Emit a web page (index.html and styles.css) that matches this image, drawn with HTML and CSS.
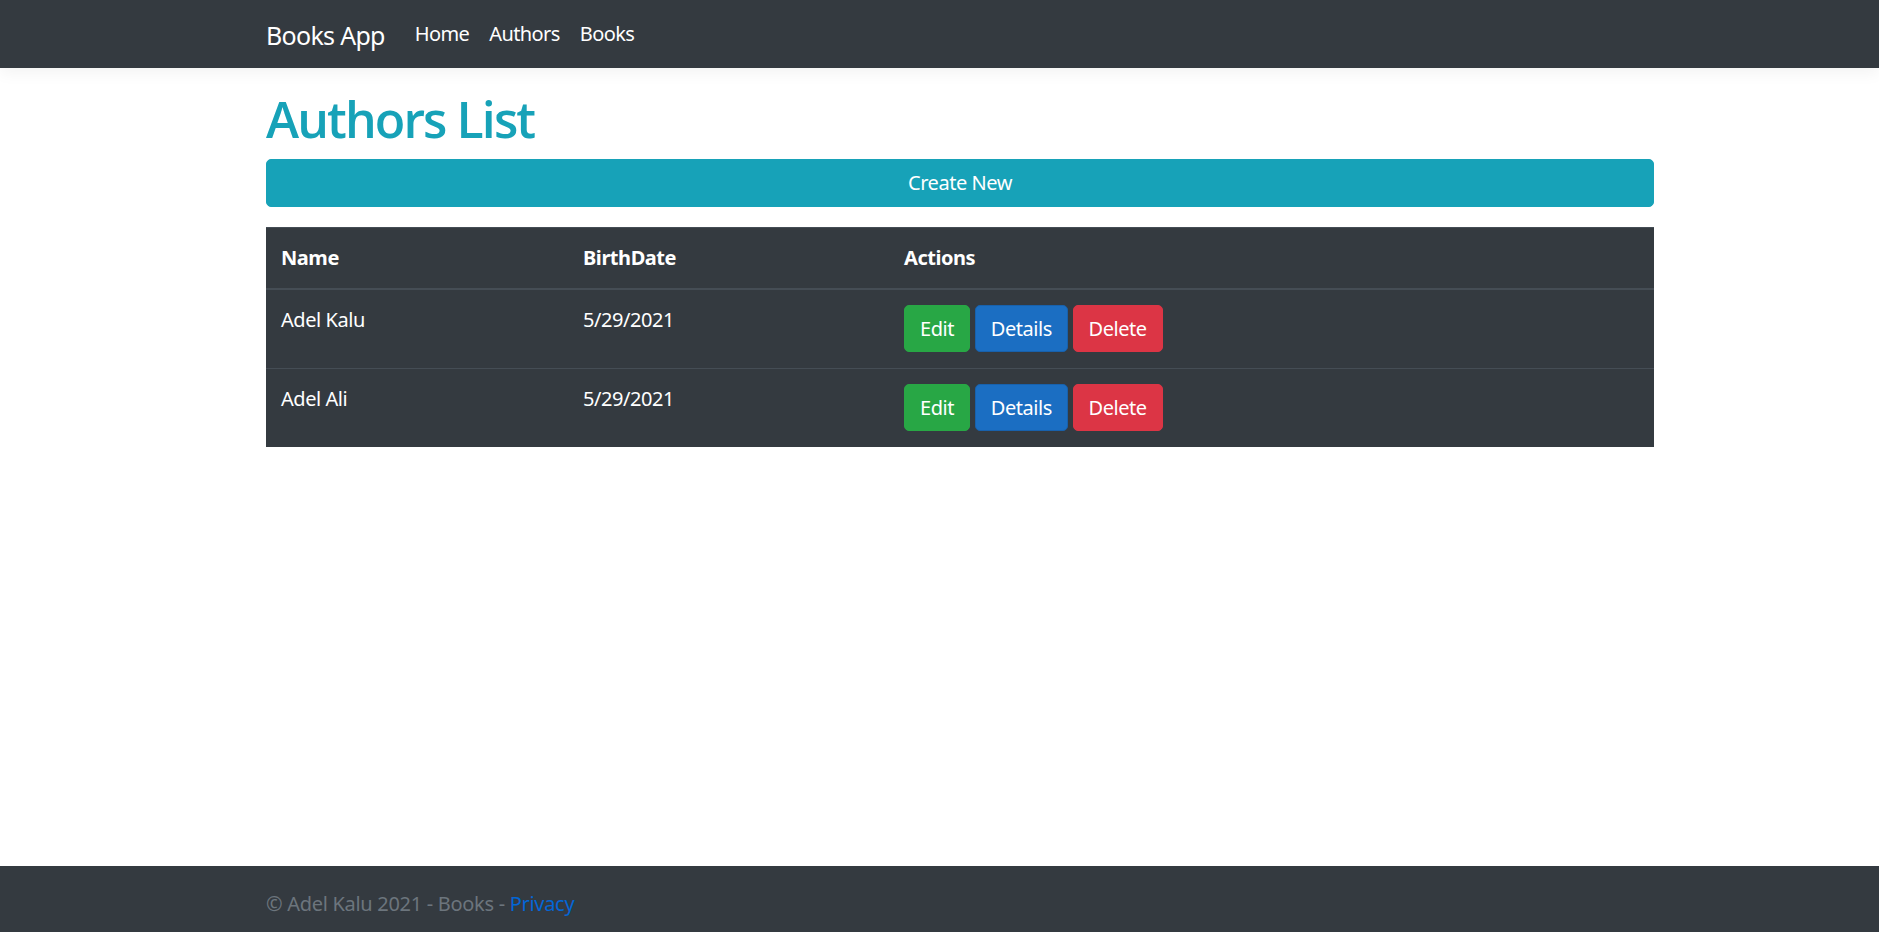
FILE: index.html
```html
<!DOCTYPE html>
<html lang="en">
<head>
<meta charset="utf-8">
<title>Authors List - Books App</title>
<link rel="stylesheet" href="styles.css">
</head>
<body>
<header class="navbar">
  <div class="nav-inner">
    <a class="brand" href="#">Books App</a>
    <nav class="nav-links">
      <a class="nav-link" href="#">Home</a>
      <a class="nav-link" href="#">Authors</a>
      <a class="nav-link" href="#">Books</a>
    </nav>
  </div>
</header>
<main class="main">
  <h1 class="title">Authors List</h1>
  <a class="btn btn-info btn-block" href="#">Create New</a>
  <table class="table">
    <thead>
      <tr>
        <th class="col-name">Name</th>
        <th class="col-date">BirthDate</th>
        <th>Actions</th>
      </tr>
    </thead>
    <tbody>
      <tr>
        <td>Adel Kalu</td>
        <td>5/29/2021</td>
        <td>
          <a class="btn btn-success" href="#">Edit</a>
          <a class="btn btn-primary" href="#">Details</a>
          <a class="btn btn-danger" href="#">Delete</a>
        </td>
      </tr>
      <tr>
        <td>Adel Ali</td>
        <td>5/29/2021</td>
        <td>
          <a class="btn btn-success" href="#">Edit</a>
          <a class="btn btn-primary" href="#">Details</a>
          <a class="btn btn-danger" href="#">Delete</a>
        </td>
      </tr>
    </tbody>
  </table>
</main>
<footer class="footer">
  <div class="footer-inner">&copy; Adel Kalu 2021 - Books - <a class="footer-link" href="#">Privacy</a></div>
</footer>
</body>
</html>
```

FILE: styles.css
```css
* { box-sizing: border-box; }

html, body { height: 100%; }

body {
  margin: 0;
  font-family: "Noto Sans", "Open Sans", "DejaVu Sans", sans-serif;
  font-size: 20px;
  line-height: 1.5;
  letter-spacing: -0.45px;
  color: #212529;
  background: #fff;
  display: flex;
  flex-direction: column;
  overflow: hidden;
}

a { text-decoration: none; }

.navbar {
  background: #343a40;
  height: 68px;
  flex: none;
  box-shadow: 0 5px 15px rgba(0, 0, 0, 0.05);
  margin-bottom: 20px;
  position: relative;
  z-index: 1;
}

.nav-inner {
  height: 100%;
  padding-left: 266px;
  display: flex;
  align-items: center;
}

.brand {
  color: #fff;
  font-size: 25px;
  letter-spacing: -0.7px;
  line-height: 37px;
  margin-right: 20px;
  margin-top: 2px;
}

.nav-links {
  display: flex;
}

.nav-link {
  color: #fff;
  padding: 0 10px;
  line-height: 30px;
  letter-spacing: -0.6px;
}

.main {
  flex: 1;
  padding: 0 225px 0 266px;
}

.title {
  margin: 1px 0 10px;
  font-family: "Open Sans", "Noto Sans", sans-serif;
  font-size: 50px;
  font-weight: 600;
  letter-spacing: -1.9px;
  line-height: 60px;
  color: #17a2b8;
}

.btn {
  display: inline-block;
  padding: 7.5px 15px;
  border: 1px solid transparent;
  border-radius: 5px;
  font-size: 20px;
  line-height: 30px;
  color: #fff;
  text-align: center;
  vertical-align: middle;
}

.btn-block {
  display: block;
  width: 100%;
  padding: 8px 15px;
  margin-bottom: 20px;
}

.btn-info { background: #17a2b8; border-color: #17a2b8; }
.btn-success { background: #28a745; border-color: #28a745; }
.btn-primary { background: #1b6ec2; border-color: #1861ac; }
.btn-danger { background: #dc3545; border-color: #dc3545; }

.table {
  width: 100%;
  border-collapse: collapse;
  background: #343a40;
  color: #fff;
}

.table th,
.table td {
  padding: 15px 15px 16px;
  text-align: left;
  vertical-align: top;
  border-top: 1px solid #454d55;
}

.table thead th {
  padding-bottom: 15px;
  font-weight: 700;
  vertical-align: bottom;
  border-bottom: 2px solid #454d55;
}

.col-name { width: 302px; }
.col-date { width: 321px; }

.footer {
  flex: none;
  height: 66px;
  background: #343a40;
  color: #6c757d;
  overflow: hidden;
  white-space: nowrap;
}

.footer-inner {
  padding-left: 266px;
  line-height: 75px;
  letter-spacing: -0.3px;
}

.footer-link { color: #0366d6; }
```
